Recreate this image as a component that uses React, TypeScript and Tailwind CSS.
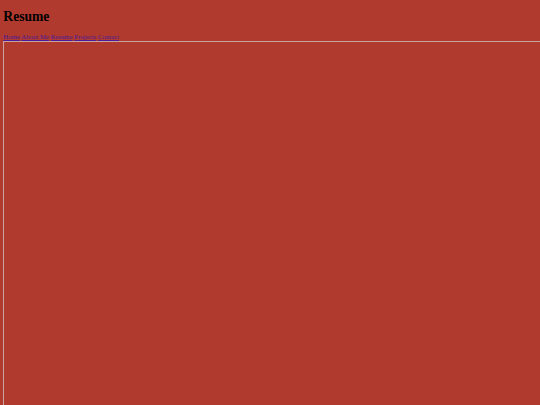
import React from 'react';

const links = ['Home', 'About Me', 'Resume', 'Projects', 'Contact'];

const App: React.FC = () => {
  return (
    <div
      className="h-[405px] w-[540px] overflow-hidden bg-[#b03a2e] pl-[3.33px] pt-[8.9px] text-black"
      style={{ fontFamily: '"Liberation Serif", "Times New Roman", serif' }}
    >
      {/* Header */}
      <h1 className="mb-[8.9px] text-[13.6px] font-bold leading-[15.3px]">Resume</h1>

      {/* Nav */}
      <nav className="text-[6.8px] leading-[7.7px]">
        {links.map((label, i) => (
          <React.Fragment key={label}>
            <a href="#" className="text-[#4a1a9a] underline">
              {label}
            </a>
            {i < links.length - 1 && ' '}
          </React.Fragment>
        ))}
      </nav>

      {/* Embedded frame */}
      <div className="h-[600px] w-[800px] border-l border-t border-[#c9a39e]" />
    </div>
  );
};

export default App;
